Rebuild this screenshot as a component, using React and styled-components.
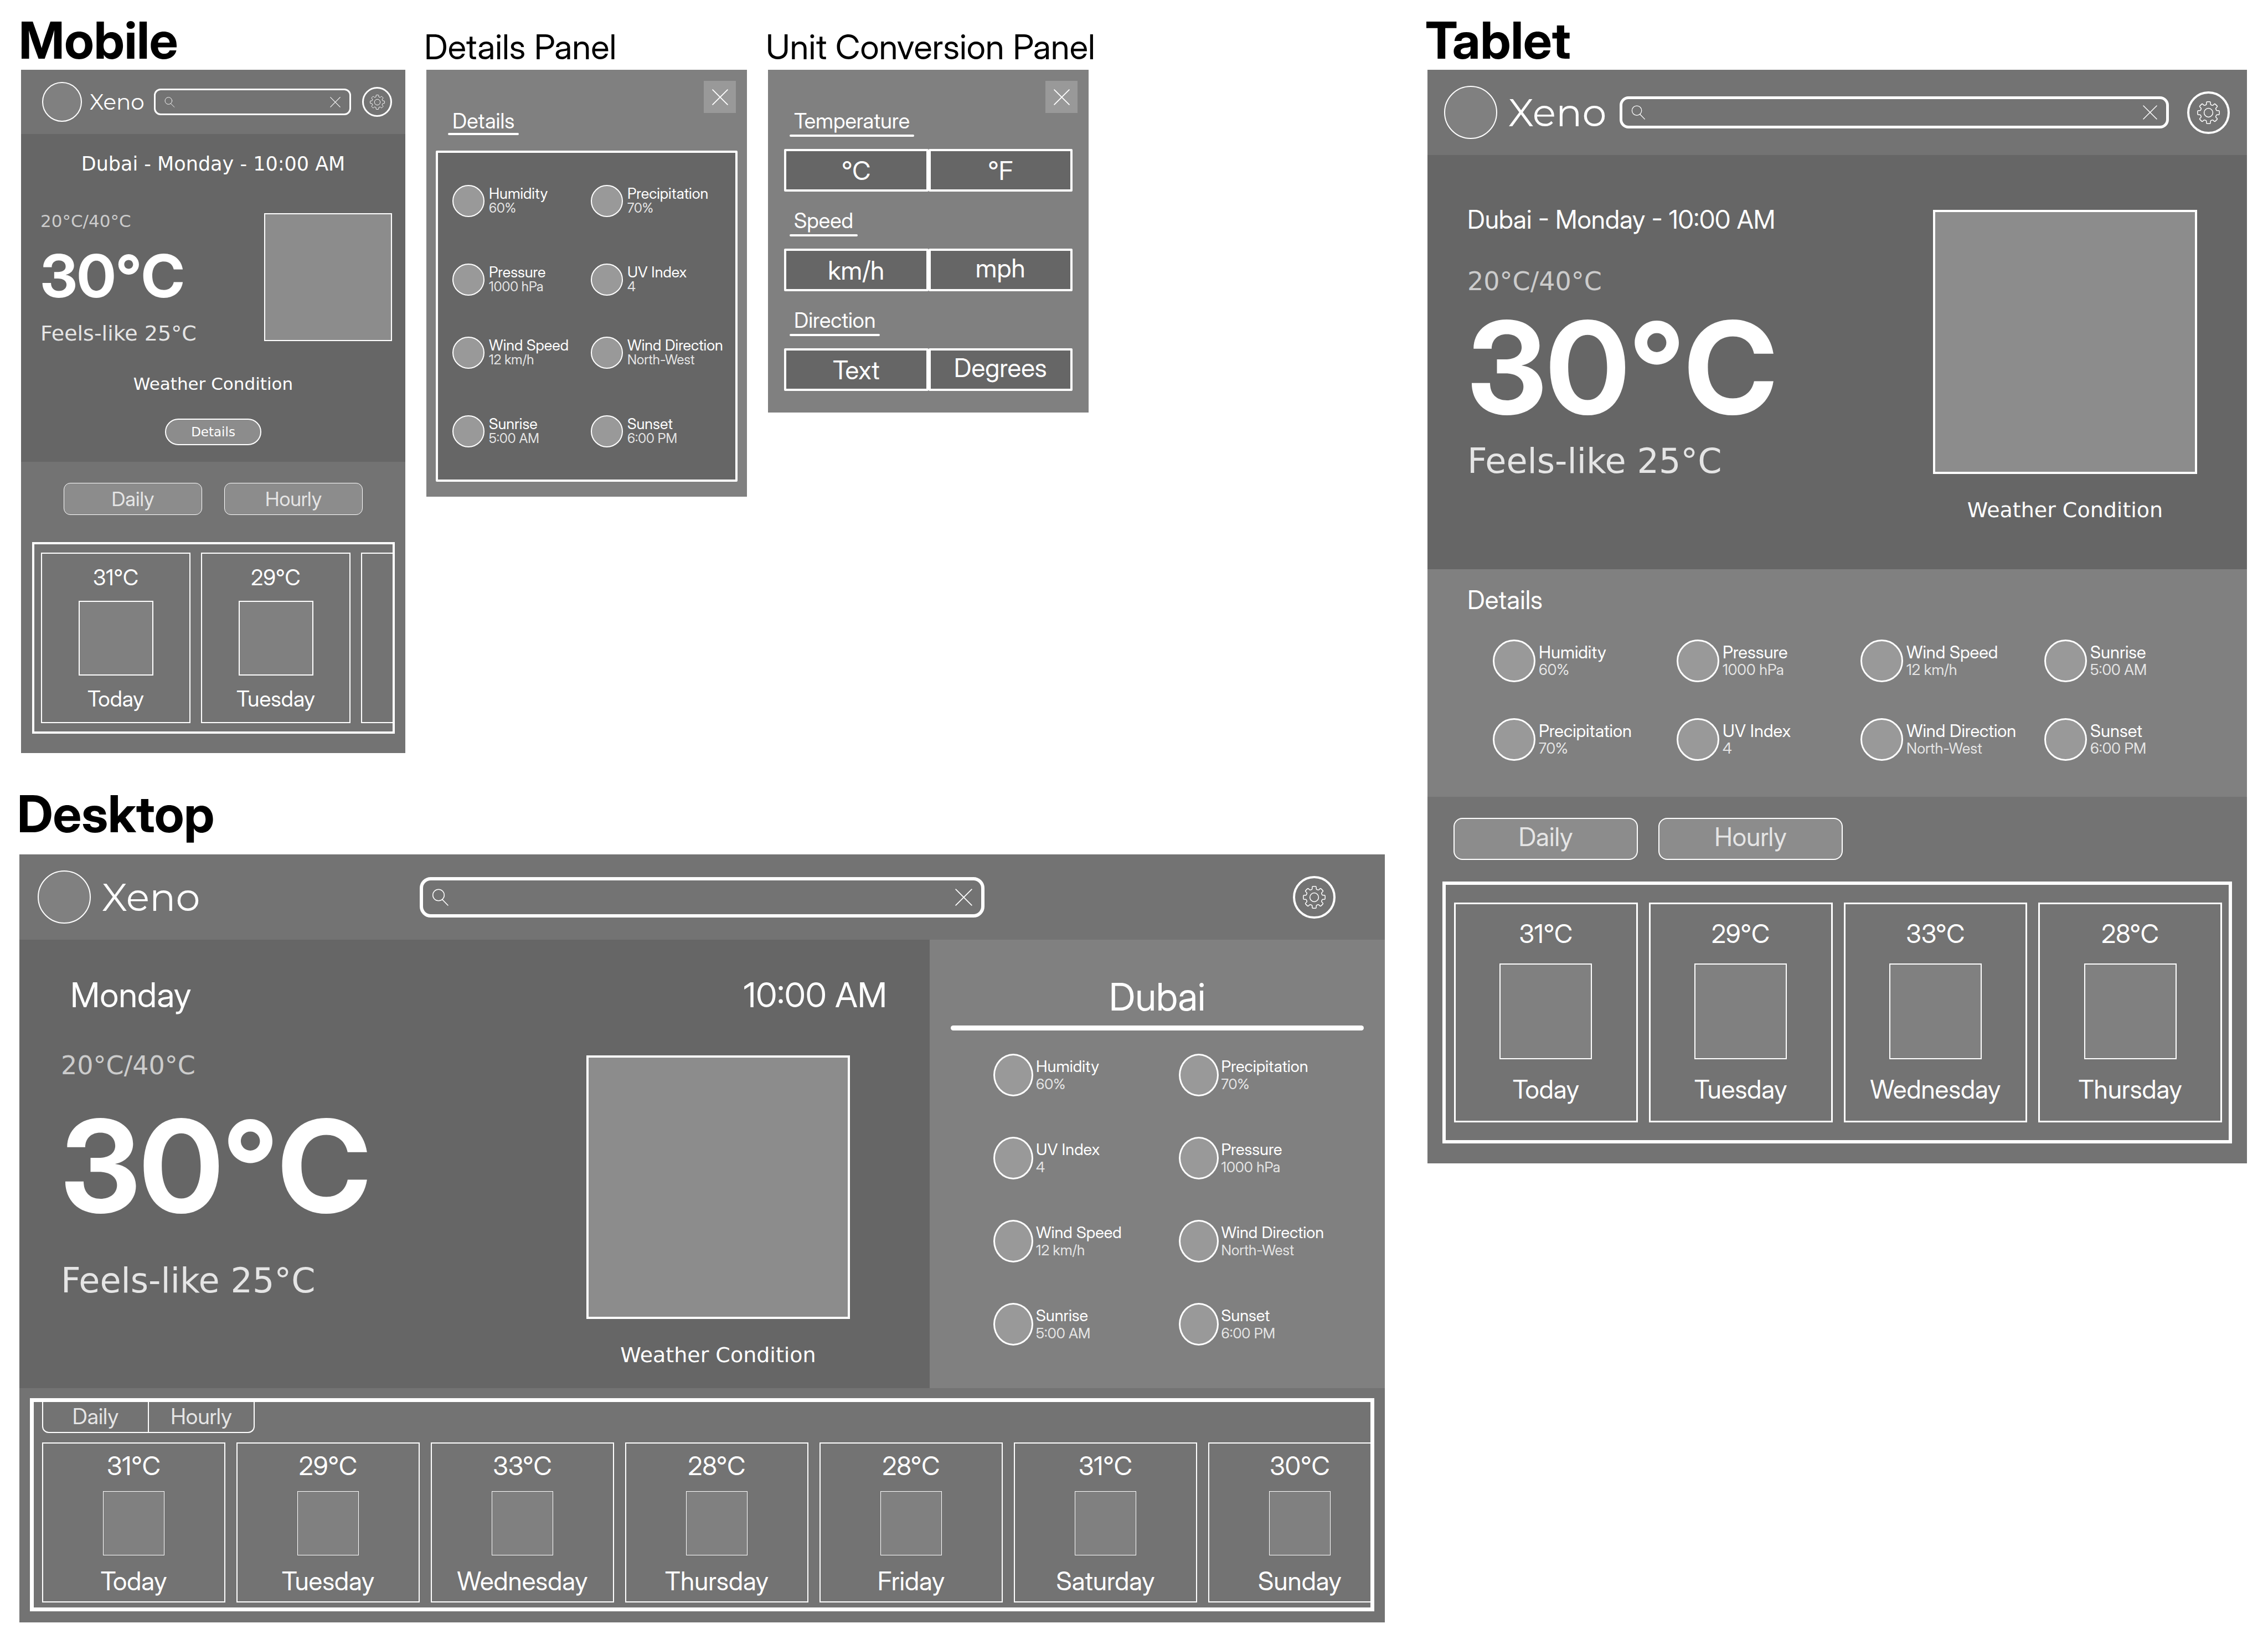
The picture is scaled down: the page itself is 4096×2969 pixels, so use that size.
import React from "react";
import styled, { createGlobalStyle } from "styled-components";

const ink = {
  bar: "#737373",
  hero: "#666666",
  panel: "#808080",
  tile: "#8c8c8c",
  dot: "#999999",
  line: "#ffffff",
  soft: "#e5e5e5",
  faint: "#cccccc",
};

const sans = `"Inter Display", Inter, "Liberation Sans", sans-serif`;
const wide = `"DejaVu Sans", sans-serif`;

const Global = createGlobalStyle`
  *, *::before, *::after { box-sizing: border-box; }
  body { margin: 0; background: #ffffff; color: #ffffff; font-family: ${sans}; font-variation-settings: "opsz" 32; }
  h1, h2, h3, p, ul, dl, dd { margin: 0; padding: 0; font-weight: 400; }
  ul { list-style: none; }
  button, input { font-family: inherit; font-variation-settings: inherit; color: inherit; margin: 0; padding: 0; }
  button { cursor: pointer; }
`;

/* ---------- page frame ---------- */

const Page = styled.main`
  display: grid;
  grid-template-columns: minmax(0, 2466fr) minmax(0, 1480fr);
  column-gap: 77px;
  align-items: start;
  padding: 27px 38px 38px 35px;
`;

const MobileRow = styled.div`
  display: grid;
  grid-template-columns: minmax(0, 694fr) minmax(0, 579fr) minmax(0, 579fr);
  column-gap: 38px;
  align-items: start;
  padding: 0 535px 0 3px;
`;

const DesktopBlock = styled.section`
  margin-top: 64px;
`;

const BoardTitle = styled.h1`
  margin: 0 0 ${(p) => p.$space || 7}px -4px;
  font-size: 92px;
  line-height: 92px;
  font-weight: 700;
  color: #000000;
  white-space: nowrap;
`;

const PanelTitle = styled.h2`
  margin: 28px 0 11px -4px;
  font-size: 62px;
  line-height: 60px;
  color: #000000;
  white-space: nowrap;
`;

/* ---------- header ---------- */

const headers = {
  sm: { cols: "240px minmax(0, 1fr) 98px", h: 116, left: 38, right: 24, avatar: 72, logo: 39, gap: 14, sh: 48, sb: 3, sr: 12, icon: 19, gear: 54, gb: 3, cog: 27 },
  md: { cols: "347px minmax(0, 1fr) 141px", h: 154, left: 30, right: 31, avatar: 96, logo: 70, gap: 20, sh: 58, sb: 5, sr: 16, icon: 26, gear: 77, gb: 4, cog: 41 },
  lg: { cols: "minmax(0, 1fr) 1020px minmax(0, 1fr)", h: 154, left: 33, right: 89, avatar: 96, logo: 70, gap: 20, sh: 73, sb: 6, sr: 20, icon: 31, gear: 77, gb: 4, cog: 41 },
};

const Bar = styled.header`
  display: grid;
  grid-template-columns: ${(p) => p.$v.cols};
  align-items: center;
  height: ${(p) => p.$v.h}px;
  background: ${ink.bar};
`;

const Brand = styled.div`
  display: flex;
  align-items: center;
  gap: ${(p) => p.$v.gap}px;
  padding-left: ${(p) => p.$v.left}px;
`;

const Avatar = styled.span`
  flex: none;
  width: ${(p) => p.$v.avatar}px;
  height: ${(p) => p.$v.avatar}px;
  border: 2px solid ${ink.line};
  border-radius: 50%;
  background: ${ink.panel};
`;

const Logo = styled.span`
  font-family: Montserrat, ${sans};
  font-size: ${(p) => p.$v.logo}px;
  line-height: 1;
  font-weight: 400;
`;

const SearchBox = styled.form`
  display: flex;
  align-items: center;
  height: ${(p) => p.$v.sh}px;
  padding: 0 16px;
  border: ${(p) => p.$v.sb}px solid ${ink.line};
  border-radius: ${(p) => p.$v.sr}px;
`;

const SearchInput = styled.input`
  flex: 1;
  min-width: 0;
  height: 100%;
  padding: 0 12px;
  border: 0;
  outline: 0;
  background: transparent;
  font-size: 24px;
`;

const PlainButton = styled.button`
  display: flex;
  border: 0;
  background: transparent;
`;

const GearButton = styled.button`
  display: flex;
  align-items: center;
  justify-content: center;
  justify-self: end;
  width: ${(p) => p.$v.gear}px;
  height: ${(p) => p.$v.gear}px;
  margin-right: ${(p) => p.$v.right}px;
  border: ${(p) => p.$v.gb}px solid ${ink.line};
  border-radius: 50%;
  background: transparent;
`;

const SearchIcon = ({ size }) => (
  <svg width={size} height={size} viewBox="0 0 31 31" fill="none" stroke="#fff" strokeWidth="1.5" strokeLinecap="round">
    <circle cx="12" cy="11.5" r="10.3" />
    <path d="M18.6 19.4 29 30" />
  </svg>
);

const CrossIcon = ({ size, weight = 1.8 }) => (
  <svg width={size} height={size} viewBox="0 0 32 32" fill="none" stroke="#fff" strokeWidth={weight} strokeLinecap="round">
    <path d="M1.2 1.2 30.8 30.8M30.8 1.2 1.2 30.8" />
  </svg>
);

const gearPath = (() => {
  const turn = (x, y, k) => {
    const a = (k * Math.PI) / 4;
    const px = x * Math.cos(a) - y * Math.sin(a) + 96;
    const py = x * Math.sin(a) + y * Math.cos(a) + 96;
    return `${px.toFixed(1)} ${py.toFixed(1)}`;
  };
  let d = "";
  for (let k = 0; k < 8; k += 1) {
    d += `${k ? "L" : "M"}${turn(-20, -67, k)}`;
    d += `L${turn(-17, -72, k)}L${turn(-17, -85, k)}Q${turn(-17, -92, k)} ${turn(-10, -92, k)}`;
    d += `L${turn(10, -92, k)}Q${turn(17, -92, k)} ${turn(17, -85, k)}`;
    d += `L${turn(17, -72, k)}L${turn(20, -67, k)}`;
  }
  return `${d}Z`;
})();

const GearIcon = ({ size }) => (
  <svg width={size} height={size} viewBox="0 0 192 192" fill="none" stroke="#fff" strokeWidth="7" strokeLinejoin="round">
    <path d={gearPath} />
    <circle cx="96" cy="96" r="37" />
  </svg>
);

const Header = ({ size }) => {
  const v = headers[size];
  return (
    <Bar $v={v}>
      <Brand $v={v}>
        <Avatar $v={v} />
        <Logo $v={v}>Xeno</Logo>
      </Brand>
      <SearchBox $v={v} role="search">
        <SearchIcon size={v.icon} />
        <SearchInput type="text" aria-label="Search city" />
        <PlainButton type="button" aria-label="Clear search">
          <CrossIcon size={v.icon} />
        </PlainButton>
      </SearchBox>
      <GearButton $v={v} type="button" aria-label="Settings">
        <GearIcon size={v.cog} />
      </GearButton>
    </Bar>
  );
};

/* ---------- current weather ---------- */

const readings = {
  sm: { range: 31, rangeLh: 28, temp: 107, tempLh: 108, feels: 38, feelsLh: 40, g1: 31, g2: 30, box: 231, bb: 2, cond: 31, condLh: 32 },
  md: { range: 46, rangeLh: 36, temp: 230, tempLh: 232, feels: 62, feelsLh: 64, g1: 21, g2: 22, box: 477, bb: 4, cond: 38, condLh: 40 },
  lg: { range: 46, rangeLh: 36, temp: 230, tempLh: 232, feels: 62, feelsLh: 64, g1: 47, g2: 60, box: 476, bb: 4, cond: 38, condLh: 40 },
};

const Range = styled.p`
  font-family: ${wide};
  font-size: ${(p) => p.$v.range}px;
  line-height: ${(p) => p.$v.rangeLh}px;
  color: ${ink.faint};
`;

const Temp = styled.p`
  margin: ${(p) => p.$v.g1}px 0 ${(p) => p.$v.g2}px;
  font-size: ${(p) => p.$v.temp}px;
  line-height: ${(p) => p.$v.tempLh}px;
  font-weight: 700;
`;

const Feels = styled.p`
  font-family: ${wide};
  font-size: ${(p) => p.$v.feels}px;
  line-height: ${(p) => p.$v.feelsLh}px;
  color: ${ink.soft};
`;

const Picture = styled.div`
  width: ${(p) => p.$v.box}px;
  height: ${(p) => p.$v.box}px;
  border: ${(p) => p.$v.bb}px solid ${ink.line};
  background: ${ink.tile};
`;

const Condition = styled.p`
  font-family: ${wide};
  font-size: ${(p) => p.$v.cond}px;
  line-height: ${(p) => p.$v.condLh}px;
  text-align: center;
`;

const Readings = ({ v }) => (
  <div>
    <Range $v={v}>20°C/40°C</Range>
    <Temp $v={v}>30°C</Temp>
    <Feels $v={v}>Feels-like 25°C</Feels>
  </div>
);

const PictureStack = styled.div`
  display: flex;
  flex-direction: column;
  align-items: center;
  gap: 45px;
`;

const Split = styled.div`
  display: flex;
  justify-content: space-between;
  align-items: flex-start;
`;

const MobileHero = styled.section`
  display: flex;
  flex-direction: column;
  padding: 34px 24px 30px 35px;
  background: ${ink.hero};
`;

const MobileDate = styled.p`
  margin: 0 0 69px -11px;
  font-family: ${wide};
  font-size: 35px;
  line-height: 40px;
  text-align: center;
`;

const MobileCondition = styled(Condition)`
  margin: 55px 0 47px -11px;
`;

const DetailsButton = styled.button`
  align-self: center;
  width: 174px;
  height: 48px;
  margin-right: 11px;
  border: 2px solid ${ink.line};
  border-radius: 24px;
  background: ${ink.tile};
  font-family: ${wide};
  font-size: 23px;
`;

const TabletHero = styled.section`
  display: flex;
  justify-content: space-between;
  align-items: flex-start;
  padding: 99px 90px 87px 72px;
  background: ${ink.hero};
`;

const TabletDate = styled.p`
  margin-bottom: 77px;
  font-size: 46px;
  line-height: 34px;
`;

const DesktopMain = styled.div`
  display: grid;
  grid-template-columns: minmax(0, 2fr) minmax(0, 1fr);
`;

const DesktopHero = styled.section`
  padding: 68px 0 40px;
  background: ${ink.hero};
`;

const DayTime = styled(Split)`
  padding: 0 77px 0 92px;
  margin-bottom: 77px;
  font-size: 62px;
  line-height: 64px;
`;

const DesktopReadings = styled(Split)`
  padding: 0 144px 0 75px;
`;

const Aside = styled.aside`
  padding: 67px 38px 76px;
  background: ${ink.panel};
`;

const City = styled.h2`
  font-size: 69px;
  line-height: 72px;
  text-align: center;

  &::after {
    content: "";
    display: block;
    height: 9px;
    margin-top: 16px;
    border-radius: 5px;
    background: ${ink.line};
  }
`;

/* ---------- detail items ---------- */

const items = {
  sm: { w: 58, h: 58, b: 2, gap: 8, label: 27, value: 24, lh: 26 },
  md: { w: 77, h: 77, b: 3, gap: 6, label: 31, value: 27, lh: 32 },
  lg: { w: 72, h: 77, b: 3, gap: 5, label: 29, value: 26, lh: 32 },
};

const Item = styled.div`
  display: flex;
  align-items: center;
  gap: ${(p) => p.$v.gap}px;
  height: ${(p) => p.$v.h}px;
  white-space: nowrap;
`;

const Dot = styled.span`
  flex: none;
  width: ${(p) => p.$v.w}px;
  height: ${(p) => p.$v.h}px;
  border: ${(p) => p.$v.b}px solid ${ink.line};
  border-radius: 50%;
  background: ${ink.dot};
`;

const Term = styled.p`
  font-size: ${(p) => p.$v.label}px;
  line-height: ${(p) => p.$v.lh}px;
`;

const Value = styled.p`
  font-size: ${(p) => p.$v.value}px;
  line-height: ${(p) => p.$v.lh}px;
  color: ${ink.soft};
`;

const facts = {
  Humidity: "60%",
  Precipitation: "70%",
  Pressure: "1000 hPa",
  "UV Index": "4",
  "Wind Speed": "12 km/h",
  "Wind Direction": "North-West",
  Sunrise: "5:00 AM",
  Sunset: "6:00 PM",
};

const Facts = ({ size, names }) => {
  const v = items[size];
  return names.map((name) => (
    <Item key={name} $v={v}>
      <Dot $v={v} />
      <div>
        <Term $v={v}>{name}</Term>
        <Value $v={v}>{facts[name]}</Value>
      </div>
    </Item>
  ));
};

const AsideGrid = styled.div`
  display: grid;
  grid-template-columns: repeat(2, minmax(0, 1fr));
  row-gap: 73px;
  padding: 42px 0 0 77px;
`;

const TabletDetails = styled.section`
  padding: 31px 34px 65px 118px;
  background: ${ink.panel};
`;

const TabletHeading = styled.h2`
  margin: 0 0 48px -46px;
  font-size: 46px;
  line-height: 48px;
`;

const TabletGrid = styled.div`
  display: grid;
  grid-template-columns: repeat(4, minmax(0, 1fr));
  row-gap: 65px;
`;

/* ---------- forecast ---------- */

const toggles = {
  sm: { w: 250, h: 58, b: 1, r: 12, font: 36, gap: 40, lift: 0, justify: "center", pad: "38px 0 49px" },
  md: { w: 333, h: 76, b: 2, r: 16, font: 46, gap: 37, lift: 8, justify: "flex-start", pad: "38px 47px 39px" },
};

const Toggles = styled.div`
  display: flex;
  justify-content: ${(p) => p.$v.justify};
  gap: ${(p) => p.$v.gap}px;
  padding: ${(p) => p.$v.pad};
`;

const Toggle = styled.button`
  width: ${(p) => p.$v.w}px;
  height: ${(p) => p.$v.h}px;
  padding-bottom: ${(p) => p.$v.lift}px;
  border: ${(p) => p.$v.b}px solid ${ink.line};
  border-radius: ${(p) => p.$v.r}px;
  background: ${ink.tile};
  color: ${ink.soft};
  font-size: ${(p) => p.$v.font}px;
`;

const forecasts = {
  sm: { frame: 4, pad: "15px 0 15px 12px", gap: 19, card: "0 0 270px", b: 2, cardPad: "23px 0 22px", font: 39, lh: 40, inner: 22, pw: 135, ph: 135, pb: 2 },
  md: { frame: 6, pad: "32px 12px 32px 15px", gap: 20, card: "1 1 0", b: 3, cardPad: "31px 0 35px", font: 46, lh: 44, inner: 32, pw: 167, ph: 173, pb: 2 },
  lg: { frame: 7, pad: "17px 0 9px 15px", gap: 20, card: "0 0 331px", b: 2, cardPad: "18px 0 15px", font: 46, lh: 44, inner: 24, pw: 111, ph: 116, pb: 1 },
};

const ForecastArea = styled.section`
  padding: ${(p) => p.$pad};
  background: ${ink.bar};
`;

const Frame = styled.div`
  margin: ${(p) => p.$margin};
  border: ${(p) => p.$v.frame}px solid ${ink.line};
  overflow: hidden;
`;

const Cards = styled.ul`
  display: flex;
  gap: ${(p) => p.$v.gap}px;
  padding: ${(p) => p.$v.pad};
`;

const Card = styled.li`
  display: flex;
  flex: ${(p) => p.$v.card};
  flex-direction: column;
  align-items: center;
  gap: ${(p) => p.$v.inner}px;
  padding: ${(p) => p.$v.cardPad};
  border: ${(p) => p.$v.b}px solid ${ink.line};
  font-size: ${(p) => p.$v.font}px;
  line-height: ${(p) => p.$v.lh}px;
`;

const Thumb = styled.div`
  width: ${(p) => p.$v.pw}px;
  height: ${(p) => p.$v.ph}px;
  border: ${(p) => p.$v.pb}px solid ${ink.line};
  background: ${ink.panel};
`;

const Tabs = styled.div`
  display: flex;
  width: 384px;
  height: 56px;
  margin-left: 15px;
  border: 2px solid ${ink.line};
  border-top: 0;
  border-radius: 0 0 12px 12px;
`;

const Tab = styled.button`
  flex: 1;
  padding-bottom: 4px;
  border: 0;
  background: transparent;
  color: ${ink.soft};
  font-size: 39px;

  & + & {
    border-left: 2px solid ${ink.line};
  }
`;

const week = [
  ["31°C", "Today"],
  ["29°C", "Tuesday"],
  ["33°C", "Wednesday"],
  ["28°C", "Thursday"],
  ["28°C", "Friday"],
  ["31°C", "Saturday"],
  ["30°C", "Sunday"],
];

const Forecast = ({ size, count, blank }) => {
  const v = forecasts[size];
  return (
    <Cards $v={v}>
      {week.slice(0, count).map(([temp, day]) => (
        <Card key={day} $v={v}>
          <span>{temp}</span>
          <Thumb $v={v} />
          <span>{day}</span>
        </Card>
      ))}
      {blank && <Card $v={v} />}
    </Cards>
  );
};

const RangeToggles = ({ size }) => {
  const v = toggles[size];
  return (
    <Toggles $v={v}>
      <Toggle $v={v} type="button">Daily</Toggle>
      <Toggle $v={v} type="button">Hourly</Toggle>
    </Toggles>
  );
};

/* ---------- pop-up panels ---------- */

const Sheet = styled.div`
  padding-bottom: ${(p) => p.$bottom}px;
  background: ${ink.panel};
`;

const CloseRow = styled.div`
  display: flex;
  justify-content: flex-end;
  padding: 20px 20px 0;
`;

const CloseButton = styled.button`
  display: flex;
  align-items: center;
  justify-content: center;
  width: 58px;
  height: 58px;
  border: 0;
  background: ${ink.dot};
`;

const Underlined = styled.h3`
  width: fit-content;
  margin-left: 39px;
  padding: 0 8px;
  font-size: 38px;
  line-height: 28px;

  &::after {
    content: "";
    display: block;
    height: 4px;
    margin: ${(p) => p.$drop}px -8px 0;
    border-radius: 2px;
    background: ${ink.line};
  }
`;

const DetailsBox = styled.div`
  display: grid;
  grid-template-columns: 250px minmax(0, 1fr);
  grid-template-rows: 142px 132px 142px 58px;
  margin: 28px 17px 0;
  padding: 58px 0 58px 26px;
  border: 4px solid ${ink.line};
  border-radius: 2px;
  background: ${ink.hero};
`;

const Choice = styled.div`
  display: grid;
  grid-template-columns: 1fr 1fr;
  margin: 22px 29px 38px;
`;

const Unit = styled.button`
  height: 77px;
  padding-bottom: ${(p) => (p.$descends ? 8 : 0)}px;
  border: 4px solid ${ink.line};
  border-radius: 2px;
  background: ${ink.hero};
  font-size: 46px;
`;

const units = [
  ["Temperature", "°C", "°F"],
  ["Speed", "km/h", "mph"],
  ["Direction", "Text", "Degrees"],
];

const Close = ({ label }) => (
  <CloseRow>
    <CloseButton type="button" aria-label={label}>
      <CrossIcon size={29} weight={2} />
    </CloseButton>
  </CloseRow>
);

/* ---------- boards ---------- */

const MobileBoard = () => (
  <section>
    <BoardTitle>Mobile</BoardTitle>
    <Header size="sm" />
    <MobileHero>
      <MobileDate>Dubai - Monday - 10:00 AM</MobileDate>
      <Split>
        <Readings v={readings.sm} />
        <Picture $v={readings.sm} />
      </Split>
      <MobileCondition $v={readings.sm}>Weather Condition</MobileCondition>
      <DetailsButton type="button">Details</DetailsButton>
    </MobileHero>
    <ForecastArea $pad="0 0 35px">
      <RangeToggles size="sm" />
      <Frame $v={forecasts.sm} $margin="0 19px 0 20px">
        <Forecast size="sm" count={2} blank />
      </Frame>
    </ForecastArea>
  </section>
);

const DetailsPanel = () => (
  <section>
    <PanelTitle>Details Panel</PanelTitle>
    <Sheet $bottom={27}>
      <Close label="Close details" />
      <Underlined $drop={8}>Details</Underlined>
      <DetailsBox>
        <Facts
          size="sm"
          names={["Humidity", "Precipitation", "Pressure", "UV Index", "Wind Speed", "Wind Direction", "Sunrise", "Sunset"]}
        />
      </DetailsBox>
    </Sheet>
  </section>
);

const UnitPanel = () => (
  <section>
    <PanelTitle>Unit Conversion Panel</PanelTitle>
    <Sheet $bottom={1}>
      <Close label="Close unit conversion" />
      {units.map(([name, first, second]) => (
        <React.Fragment key={name}>
          <Underlined $drop={11}>{name}</Underlined>
          <Choice role="group" aria-label={name}>
            <Unit type="button">{first}</Unit>
            <Unit type="button" $descends={/[gp]/.test(second)}>{second}</Unit>
          </Choice>
        </React.Fragment>
      ))}
    </Sheet>
  </section>
);

const DesktopBoard = () => (
  <DesktopBlock>
    <BoardTitle $space={27}>Desktop</BoardTitle>
    <Header size="lg" />
    <DesktopMain>
      <DesktopHero>
        <DayTime>
          <p>Monday</p>
          <p>10:00 AM</p>
        </DayTime>
        <DesktopReadings>
          <Readings v={readings.lg} />
          <PictureStack>
            <Picture $v={readings.lg} />
            <Condition $v={readings.lg}>Weather Condition</Condition>
          </PictureStack>
        </DesktopReadings>
      </DesktopHero>
      <Aside>
        <City>Dubai</City>
        <AsideGrid>
          <Facts
            size="lg"
            names={["Humidity", "Precipitation", "UV Index", "Pressure", "Wind Speed", "Wind Direction", "Sunrise", "Sunset"]}
          />
        </AsideGrid>
      </Aside>
    </DesktopMain>
    <ForecastArea $pad="18px 0 20px">
      <Frame $v={forecasts.lg} $margin="0 19px">
        <Tabs>
          <Tab type="button">Daily</Tab>
          <Tab type="button">Hourly</Tab>
        </Tabs>
        <Forecast size="lg" count={7} />
      </Frame>
    </ForecastArea>
  </DesktopBlock>
);

const TabletBoard = () => (
  <section>
    <BoardTitle>Tablet</BoardTitle>
    <Header size="md" />
    <TabletHero>
      <div>
        <TabletDate>Dubai - Monday - 10:00 AM</TabletDate>
        <Readings v={readings.md} />
      </div>
      <PictureStack>
        <Picture $v={readings.md} />
        <Condition $v={readings.md}>Weather Condition</Condition>
      </PictureStack>
    </TabletHero>
    <TabletDetails>
      <TabletHeading>Details</TabletHeading>
      <TabletGrid>
        <Facts
          size="md"
          names={["Humidity", "Pressure", "Wind Speed", "Sunrise", "Precipitation", "UV Index", "Wind Direction", "Sunset"]}
        />
      </TabletGrid>
    </TabletDetails>
    <ForecastArea $pad="0 0 36px">
      <RangeToggles size="md" />
      <Frame $v={forecasts.md} $margin="0 27px">
        <Forecast size="md" count={4} />
      </Frame>
    </ForecastArea>
  </section>
);

export default function App() {
  return (
    <>
      <Global />
      <Page>
        <div>
          <MobileRow>
            <MobileBoard />
            <DetailsPanel />
            <UnitPanel />
          </MobileRow>
          <DesktopBoard />
        </div>
        <TabletBoard />
      </Page>
    </>
  );
}
